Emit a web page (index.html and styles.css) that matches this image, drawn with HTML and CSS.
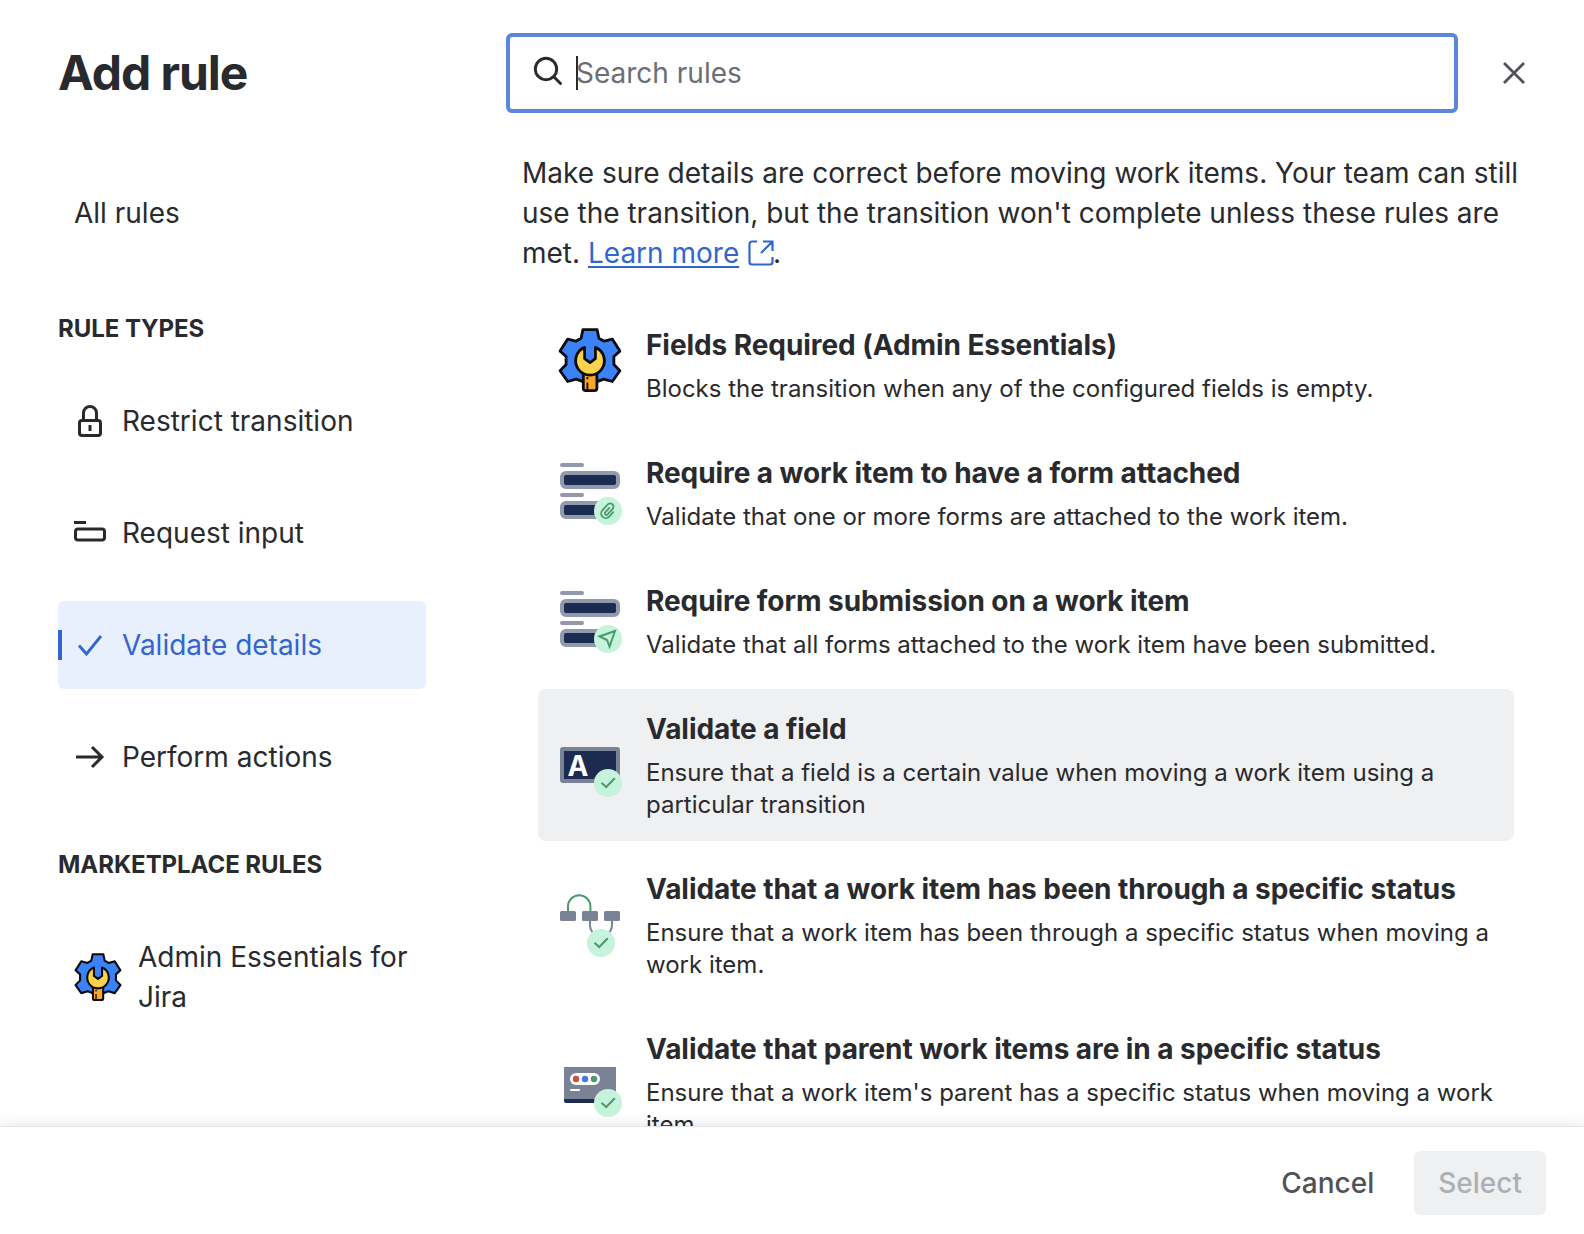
FILE: index.html
```html
<!DOCTYPE html>
<html lang="en">
<head>
<meta charset="utf-8">
<title>Add rule</title>
<link rel="stylesheet" href="styles.css">
</head>
<body>
<svg class="defs" width="0" height="0" aria-hidden="true">
  <defs>
    <symbol id="gear" viewBox="0 0 64 64">
      <g stroke="#0b0b12" stroke-width="2.8" stroke-linejoin="round">
        <path fill="#3b82f6" d="M24.900 1.600h14.200l1.800 8.600 5.200 3 8.200-2.100 7.600 12-6 5.400v8l6 6.200-7.600 10.800-8.600-2.400L39 53.600H25l-6.700-2.500-8.600 2.400-7.600-10.800 6-6.200v-8l-6-5.400 7.600-12 8.200 2.100 5.200-3z"/>
        <path fill="#f9a72b" d="M25.300 45h13.600v15.200q0 2.400-2.400 2.400h-8.800q-2.400 0-2.400-2.400z"/>
        <path fill="#fcd34a" d="M26.600 19.400v11.200l5.400 4 5.400-4V19.400a14.400 14.400 0 1 1-10.800 0z"/>
      </g>
      <path d="M29.400 49v2.200M29.400 54.500V62" stroke="#0b0b12" stroke-width="1.800"/>
    </symbol>
    <symbol id="form" viewBox="0 0 64 64">
      <path d="M4 4h20M4 34h20" stroke="#9199ad" stroke-width="4" stroke-linecap="round"/>
      <rect x="4" y="12" width="56" height="14" rx="4" fill="#1c2b50" stroke="#9199ad" stroke-width="4"/>
      <rect x="4" y="42" width="56" height="14" rx="4" fill="#1c2b50" stroke="#9199ad" stroke-width="4"/>
      <rect x="44" y="39" width="20" height="21" fill="#fff"/>
      <circle cx="50" cy="50" r="14" fill="#c6f3dc"/>
    </symbol>
    <symbol id="badge" viewBox="0 0 28 28">
      <circle cx="14" cy="14" r="14" fill="#c6f3dc"/>
      <path d="M7.500 13.700l4.700 4.300 8.600-8.800" fill="none" stroke="#4c9a6d" stroke-width="2"/>
    </symbol>
  </defs>
</svg>
<div class="dialog">
  <header class="header">
    <h1 class="title">Add rule</h1>
    <div class="search">
      <svg class="search-icon" width="32" height="32" viewBox="0 0 32 32" fill="none" stroke="#292a2e" stroke-width="2.900"><circle cx="14" cy="13" r="10.700"/><path d="M22 21l6.500 6.500" stroke-linecap="round"/></svg>
      <span class="caret"></span><span class="placeholder">Search rules</span>
    </div>
    <svg class="close" width="24" height="24" viewBox="0 0 24 24" stroke="#505258" stroke-width="2.800"><path d="M2 2l20 20M22 2L2 22"/></svg>
  </header>
  <div class="body">
    <nav class="sidebar">
      <a class="item all">All rules</a>
      <h2 class="group">RULE TYPES</h2>
      <a class="item">
        <svg width="32" height="32" viewBox="0 0 32 32" fill="none" stroke="#292a2e" stroke-width="3"><rect x="5.500" y="15.500" width="21" height="15" rx="2.500"/><path d="M9.500 15.500V8a6.500 6.500 0 0 1 13 0v7.500M16 20v6"/></svg>
        Restrict transition</a>
      <a class="item">
        <svg width="32" height="32" viewBox="0 0 32 32" fill="none" stroke="#292a2e" stroke-width="3"><path d="M0 5.500h12"/><rect x="1.500" y="12" width="29" height="11" rx="2.500"/></svg>
        Request input</a>
      <a class="item selected">
        <svg width="32" height="32" viewBox="0 0 32 32" fill="none" stroke="#3366cc" stroke-width="2.800"><path d="M5 16.500l7.500 8.500L27 7"/></svg>
        Validate details</a>
      <a class="item">
        <svg width="32" height="32" viewBox="0 0 32 32" fill="none" stroke="#292a2e" stroke-width="3"><path d="M2 16h26M18 6l10 10-10 10"/></svg>
        Perform actions</a>
      <h2 class="group market">MARKETPLACE RULES</h2>
      <a class="item app"><svg width="48" height="48"><use href="#gear"/></svg><span>Admin Essentials for Jira</span></a>
    </nav>
    <main class="content">
      <p class="intro">Make sure details are correct before moving work items. Your team can still use the transition, but the transition won't complete unless these rules are met. <a class="link">Learn more</a> <svg class="external" width="26" height="26" viewBox="0 0 26 26" fill="none" stroke="#3366cc" stroke-width="2.200"><path d="M9 1.500H4A2.500 2.500 0 0 0 1.500 4v18A2.500 2.500 0 0 0 4 24.500h18a2.500 2.500 0 0 0 2.500-2.500v-5M15 1.500h9.500V11M24.500 1.500L13 13"/></svg>.</p>
      <div class="rules">
        <div class="rule">
          <svg class="rule-icon raised" width="64" height="64"><use href="#gear"/></svg>
          <div><h3>Fields Required (Admin Essentials)</h3><p>Blocks the transition when any of the configured fields is empty.</p></div>
        </div>
        <div class="rule">
          <svg class="rule-icon" width="64" height="64" viewBox="0 0 64 64"><use href="#form"/><g transform="translate(49.500 50) rotate(42)" fill="none" stroke="#4c9a6d" stroke-width="1.800" stroke-linecap="round"><path d="M5 -3V3a4.600 4.600 0 0 1-9.200 0V-5a3.300 3.300 0 0 1 6.600 0V2.500a1.600 1.600 0 0 1-3.200 0V-3.500"/></g></svg>
          <div><h3>Require a work item to have a form attached</h3><p>Validate that one or more forms are attached to the work item.</p></div>
        </div>
        <div class="rule">
          <svg class="rule-icon" width="64" height="64" viewBox="0 0 64 64"><use href="#form"/><path d="M57 42L41.500 47.500l7.500 3.500L51.500 57.500z" fill="none" stroke="#4c9a6d" stroke-width="2"/></svg>
          <div><h3>Require form submission on a work item</h3><p>Validate that all forms attached to the work item have been submitted.</p></div>
        </div>
        <div class="rule hovered">
          <svg class="rule-icon" width="64" height="64" viewBox="0 0 64 64"><rect x="4" y="16" width="56" height="32" rx="1" fill="#1c2b50" stroke="#7a8296" stroke-width="4"/><text x="9.500" y="42.500" class="glyph">A</text><use href="#badge" x="36" y="36" width="28" height="28"/></svg>
          <div><h3>Validate a field</h3><p>Ensure that a field is a certain value when moving a work item using a particular transition</p></div>
        </div>
        <div class="rule">
          <svg class="rule-icon" width="64" height="64" viewBox="0 0 64 64"><path d="M10 19v-5.500a11.200 11.200 0 0 1 22.400 0V19" fill="none" stroke="#4c9a6d" stroke-width="2"/><path d="M32 27v5q0 5 4 9M54 27v5q0 5-4 9" fill="none" stroke="#7a8296" stroke-width="2"/><g fill="#7a8296"><rect x="2" y="18" width="16" height="10" rx="1.500"/><rect x="24" y="18" width="16" height="10" rx="1.500"/><rect x="46" y="18" width="16" height="10" rx="1.500"/></g><use href="#badge" x="29" y="36" width="28" height="28"/></svg>
          <div><h3>Validate that a work item has been through a specific status</h3><p>Ensure that a work item has been through a specific status when moving a work item.</p></div>
        </div>
        <div class="rule">
          <svg class="rule-icon" width="64" height="64" viewBox="0 0 64 64"><path d="M6 44h52v4a2 2 0 0 1-2 2H8a2 2 0 0 1-2-2z" fill="#1c2b50"/><path d="M6 14h52v32H6z" fill="#7a8296"/><rect x="12" y="20" width="30" height="12" rx="6" fill="#fff"/><circle cx="18" cy="26" r="3.200" fill="#c9513f"/><circle cx="27" cy="26" r="3.200" fill="#3b7cf0"/><circle cx="36" cy="26" r="3.200" fill="#4c9a6d"/><path d="M13 37h8" stroke="#fff" stroke-width="2" stroke-linecap="round"/><use href="#badge" x="36" y="36" width="28" height="28"/></svg>
          <div><h3>Validate that parent work items are in a specific status</h3><p>Ensure that a work item's parent has a specific status when moving a work item.</p></div>
        </div>
      </div>
    </main>
  </div>
  <footer class="footer">
    <button class="button">Cancel</button>
    <button class="button primary" disabled>Select</button>
  </footer>
</div>
</body>
</html>
```
FILE: styles.css
```css
* { box-sizing: border-box; }
body { margin: 0; background: #fff; color: #292a2e; font: 400 28px/40px Inter, sans-serif; }
h1, h2, h3, p { margin: 0; }
.defs { display: block; height: 0; }
.dialog { height: 1234px; display: flex; flex-direction: column; overflow: hidden; }
.header { flex: none; height: 145px; padding: 33px 58px 0; display: flex; align-items: flex-start; }
.title { width: 448px; font-size: 48px; line-height: 80px; font-weight: 653; letter-spacing: -1.05px; }
.search { width: 952px; height: 80px; border: 4px solid #5b87da; border-radius: 6px; display: flex; align-items: center; padding-left: 22px; }
.search-icon { flex: none; margin-top: -2px; }
.caret { width: 2px; height: 34px; background: #292a2e; margin-left: 12px; }
.placeholder { color: #6b6e76; margin-left: -2px; }
.close { margin: 28px 0 0 44px; flex: none; }
.body { flex: 1; min-height: 0; display: flex; padding-left: 58px; }
.sidebar { width: 368px; flex: none; padding-top: 24px; display: flex; flex-direction: column; }
.item { height: 88px; flex: none; padding: 0 16px; display: flex; align-items: center; gap: 16px; border-radius: 6px; margin-bottom: 24px; }
.item svg { flex: none; }
.all { margin-bottom: 56px; }
.group { font-size: 24px; line-height: 32px; font-weight: 650; letter-spacing: -0.05px; margin-bottom: 32px; flex: none; }
.market { margin-top: 24px; }
.app { height: 128px; }
.selected { background: #e9f0fd; color: #3366cc; background-image: linear-gradient(#3366cc, #3366cc); background-size: 4px 30px; background-position: left center; background-repeat: no-repeat; }
.content { margin-left: 96px; width: 1010px; padding-top: 8px; }
.link { color: #3366cc; text-decoration: underline; text-decoration-thickness: 2px; text-underline-offset: 3px; }
.external { vertical-align: -3px; margin: 0 -1px 0 1px; }
.rules { margin: 32px 0 0 16px; width: 976px; display: flex; flex-direction: column; gap: 8px; }
.rule { display: flex; align-items: center; gap: 24px; padding: 20px 16px 20px 20px; border-radius: 8px; }
.rule h3 { font-size: 28px; line-height: 40px; font-weight: 650; letter-spacing: -0.07px; margin-bottom: 8px; }
.rule p { font-size: 24px; line-height: 32px; }
.rule-icon { flex: none; }
.raised { margin-bottom: 10px; }
.hovered { background: #eff0f2; }
.glyph { font: 700 28px Inter, sans-serif; fill: #fff; }
.footer { flex: none; height: 108px; background: #fff; border-top: 1px solid #e4e5e7; box-shadow: 0 0 14px rgba(30, 31, 33, 0.13); position: relative; display: flex; justify-content: flex-end; align-items: flex-start; gap: 16px; padding: 24px 38px 0; }
.button { border: 0; background: none; height: 64px; padding: 0 24px; border-radius: 6px; font: 500 28px/40px Inter, sans-serif; color: #505258; }
.primary { background: #eff0f2; color: #adafb3; }
```
